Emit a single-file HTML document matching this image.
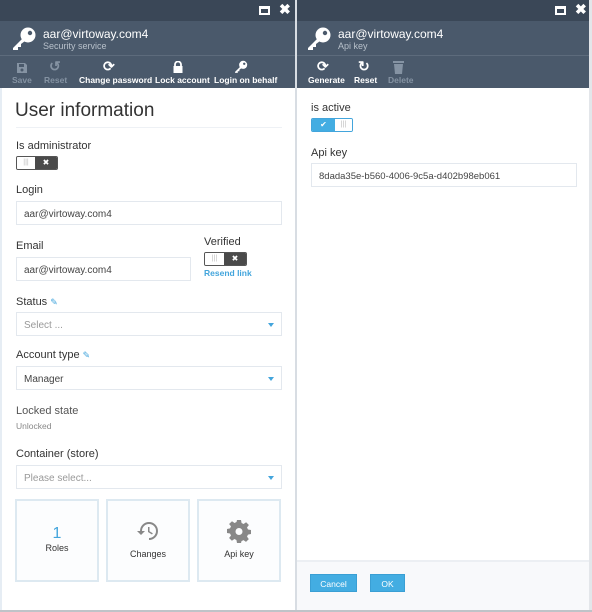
<!DOCTYPE html>
<html><head><meta charset="utf-8"><style>
*{box-sizing:border-box;margin:0;padding:0}
body{width:592px;height:612px;overflow:hidden;background:#fff;font-family:"Liberation Sans",Arial,sans-serif;position:relative;color:#333}
.a{position:absolute}
.tb{background:#3a4757;height:21px}
.hd{background:#4a596b;height:67px;top:21px}
.sep{background:#5d6b7c;height:1px;top:55px}
.t1{color:#fff;font-size:12px}
.t2{color:#b7c0ca;font-size:9px}
.tl{font-size:8.5px;font-weight:bold;color:#fff;text-align:center;white-space:nowrap}
.dis{color:#8593a3}
.lab{font-size:11px;color:#333}
.in{border:1px solid #e3e8ee;height:24px;font-size:10px;padding:7px 7px;color:#444;background:#fff}
.ph{color:#999}
.arr{position:absolute;right:7px;top:10px;border-left:3px solid transparent;border-right:3px solid transparent;border-top:4px solid #43a5dc}
.tg{height:14px;border:1px solid #555;border-radius:2px;overflow:hidden;display:flex}
.tile{border:2px solid #dde9f1;background:#fcfdfe;width:84px;height:83px;top:499px;text-align:center;font-size:9px;color:#333}
.btn{background:#43ade2;color:#fff;font-size:8.5px;text-align:center;height:18px;line-height:18px;border:1px solid #3a9fd4}
</style></head><body>
<!-- left panel -->
<div class="a tb" style="left:0;top:0;width:296px"></div>
<div class="a" style="left:259px;top:6px;width:11px;height:9px;border:2px solid #fff;border-top-width:3px"></div>
<div class="a" style="left:279px;top:1px;color:#fff;font-size:14px;font-weight:bold">✖</div>
<div class="a hd" style="left:0;width:296px"></div>
<div class="a sep" style="left:0;width:296px"></div>
<svg class="a" style="left:11px;top:27px" width="26" height="24" viewBox="0 0 26 24"><circle cx="17" cy="8" r="7.5" fill="#fff"/><circle cx="19" cy="6" r="2.2" fill="#4a596b"/><path d="M12 11 L2 21 L2 23 L7 23 L7 20 L10 20 L10 17 L14 14Z" fill="#fff"/></svg>
<div class="a t1" style="left:43px;top:27px">aar@virtoway.com4</div>
<div class="a t2" style="left:43px;top:41px">Security service</div>
<svg class="a" style="left:16px;top:62px" width="12" height="12" viewBox="0 0 12 12"><path d="M1 1h8l2 2v8H1z" fill="#8593a3"/><rect x="3" y="2" width="5" height="3" fill="#4a596b"/><circle cx="6" cy="8" r="1.5" fill="#4a596b"/></svg>
<div class="a tl dis" style="left:12px;top:75px">Save</div>
<div class="a" style="left:49px;top:58px;color:#8593a3;font-size:14px;font-weight:bold">↺</div>
<div class="a tl dis" style="left:44px;top:75px">Reset</div>
<div class="a" style="left:103px;top:58px;color:#fff;font-size:14px;font-weight:bold">⟳</div>
<div class="a tl" style="left:79px;top:75px">Change password</div>
<svg class="a" style="left:173px;top:61px" width="10" height="12" viewBox="0 0 10 12"><path d="M2 5V3.5a3 3 0 016 0V5" stroke="#fff" stroke-width="1.8" fill="none"/><rect x="0.5" y="5" width="9" height="7" fill="#fff"/></svg>
<div class="a tl" style="left:155px;top:75px">Lock account</div>
<svg class="a" style="left:234px;top:60px" width="14" height="14" viewBox="0 0 26 24"><circle cx="17" cy="8" r="7.5" fill="#fff"/><circle cx="19" cy="6" r="2.2" fill="#4a596b"/><path d="M12 11 L2 21 L2 23 L7 23 L7 20 L10 20 L10 17 L14 14Z" fill="#fff"/></svg>
<div class="a tl" style="left:214px;top:75px">Login on behalf</div>
<div class="a" style="left:0;top:88px;width:2px;height:524px;background:#e6edf4"></div>
<div class="a" style="left:15px;top:100px;font-size:19px;color:#333">User information</div>
<div class="a" style="left:16px;top:127px;width:266px;height:1px;background:#eef1f5"></div>
<div class="a lab" style="left:16px;top:140px">Is administrator</div>
<div class="a tg" style="left:16px;top:156px;width:42px"><div style="width:18px;background:#fff;color:#bbb;font-size:7px;text-align:center;line-height:12px">|||</div><div style="flex:1;background:#4a4a4a;color:#fff;font-size:8px;text-align:center;line-height:12px">✖</div></div>
<div class="a lab" style="left:16px;top:184px">Login</div>
<div class="a in" style="left:16px;top:201px;width:266px">aar@virtoway.com4</div>
<div class="a lab" style="left:16px;top:240px">Email</div>
<div class="a in" style="left:16px;top:257px;width:175px">aar@virtoway.com4</div>
<div class="a lab" style="left:204px;top:236px">Verified</div>
<div class="a tg" style="left:204px;top:252px;width:43px"><div style="width:19px;background:#fff;color:#bbb;font-size:7px;text-align:center;line-height:12px">|||</div><div style="flex:1;background:#4a4a4a;color:#fff;font-size:8px;text-align:center;line-height:12px">✖</div></div>
<div class="a" style="left:204px;top:268px;font-size:8.5px;font-weight:bold;color:#43a5dc">Resend link</div>
<div class="a lab" style="left:16px;top:296px">Status <span style="color:#43a5dc;font-size:9px">✎</span></div>
<div class="a in ph" style="left:16px;top:312px;width:266px">Select ...<i class="arr"></i></div>
<div class="a lab" style="left:16px;top:349px">Account type <span style="color:#43a5dc;font-size:9px">✎</span></div>
<div class="a in" style="left:16px;top:366px;width:266px">Manager<i class="arr"></i></div>
<div class="a lab" style="left:16px;top:405px;color:#555">Locked state</div>
<div class="a" style="left:16px;top:421px;font-size:8.5px;color:#888">Unlocked</div>
<div class="a lab" style="left:16px;top:448px">Container (store)</div>
<div class="a in ph" style="left:16px;top:465px;width:266px">Please select...<i class="arr"></i></div>
<div class="a tile" style="left:15px"><div style="color:#43a5dc;font-size:16px;margin-top:24px">1</div><div>Roles</div></div>
<div class="a tile" style="left:106px"><svg style="margin-top:18px" width="24" height="24" viewBox="0 0 24 24"><path d="M13 3a9 9 0 00-9 9H1l4 4 4-4H6a7 7 0 117 7v2a9 9 0 000-18z" fill="#888"/><path d="M12 8v5l4 2.5.8-1.3-3.3-2V8z" fill="#888"/></svg><div style="margin-top:4px">Changes</div></div>
<div class="a tile" style="left:197px"><svg style="margin-top:18px" width="24" height="24" viewBox="0 0 24 24"><path d="M10 1h4l.6 3 2 1 2.5-1.8 2.8 2.8L20 8.5l1 2 3 .5v4l-3 .6-1 2 1.8 2.5-2.8 2.8-2.5-1.8-2 1L14 24h-4l-.6-3-2-1-2.5 1.8-2.8-2.8L4 16.5l-1-2-3-.5v-4l3-.6 1-2L2.1 5 5 2.2l2.5 1.8 2-1z" fill="#888"/><circle cx="12" cy="12.5" r="3.5" fill="#fcfdfe"/></svg><div style="margin-top:4px">Api key</div></div>
<!-- divider -->
<div class="a" style="left:295px;top:0;width:2px;height:612px;background:#d8dde3"></div>
<!-- right panel -->
<div class="a tb" style="left:297px;top:0;width:293px"></div>
<div class="a" style="left:555px;top:6px;width:11px;height:9px;border:2px solid #fff;border-top-width:3px"></div>
<div class="a" style="left:575px;top:1px;color:#fff;font-size:14px;font-weight:bold">✖</div>
<div class="a hd" style="left:297px;width:293px"></div>
<div class="a sep" style="left:297px;width:293px"></div>
<svg class="a" style="left:306px;top:27px" width="26" height="24" viewBox="0 0 26 24"><circle cx="17" cy="8" r="7.5" fill="#fff"/><circle cx="19" cy="6" r="2.2" fill="#4a596b"/><path d="M12 11 L2 21 L2 23 L7 23 L7 20 L10 20 L10 17 L14 14Z" fill="#fff"/></svg>
<div class="a t1" style="left:338px;top:27px">aar@virtoway.com4</div>
<div class="a t2" style="left:338px;top:41px">Api key</div>
<div class="a" style="left:317px;top:58px;color:#fff;font-size:14px;font-weight:bold">⟳</div>
<div class="a tl" style="left:308px;top:75px">Generate</div>
<div class="a" style="left:358px;top:58px;color:#fff;font-size:14px;font-weight:bold">↻</div>
<div class="a tl" style="left:354px;top:75px">Reset</div>
<svg class="a" style="left:393px;top:60px" width="11" height="14" viewBox="0 0 11 14"><rect x="0" y="1" width="11" height="2" fill="#8593a3"/><path d="M1 4h9l-1 10H2z" fill="#8593a3"/></svg>
<div class="a tl dis" style="left:388px;top:75px">Delete</div>
<div class="a lab" style="left:311px;top:102px">is active</div>
<div class="a tg" style="left:311px;top:118px;width:42px;border-color:#43a5dc"><div style="width:23px;background:#43ade2;color:#fff;font-size:8px;text-align:center;line-height:12px">✔</div><div style="flex:1;background:#fff;color:#bbb;font-size:7px;text-align:center;line-height:12px">|||</div></div>
<div class="a lab" style="left:311px;top:147px">Api key</div>
<div class="a in" style="left:311px;top:163px;width:266px;font-size:9.5px">8dada35e-b560-4006-9c5a-d402b98eb061</div>
<div class="a" style="left:297px;top:560px;width:293px;height:50px;background:#f8f9fb;border-top:2px solid #eceff3"></div>
<div class="a btn" style="left:310px;top:574px;width:47px">Cancel</div>
<div class="a btn" style="left:370px;top:574px;width:35px">OK</div>
<div class="a" style="left:589px;top:0;width:3px;height:612px;background:#e3e6ea"></div>
<div class="a" style="left:0;top:610px;width:592px;height:2px;background:#bfc3c8"></div>
</body></html>
